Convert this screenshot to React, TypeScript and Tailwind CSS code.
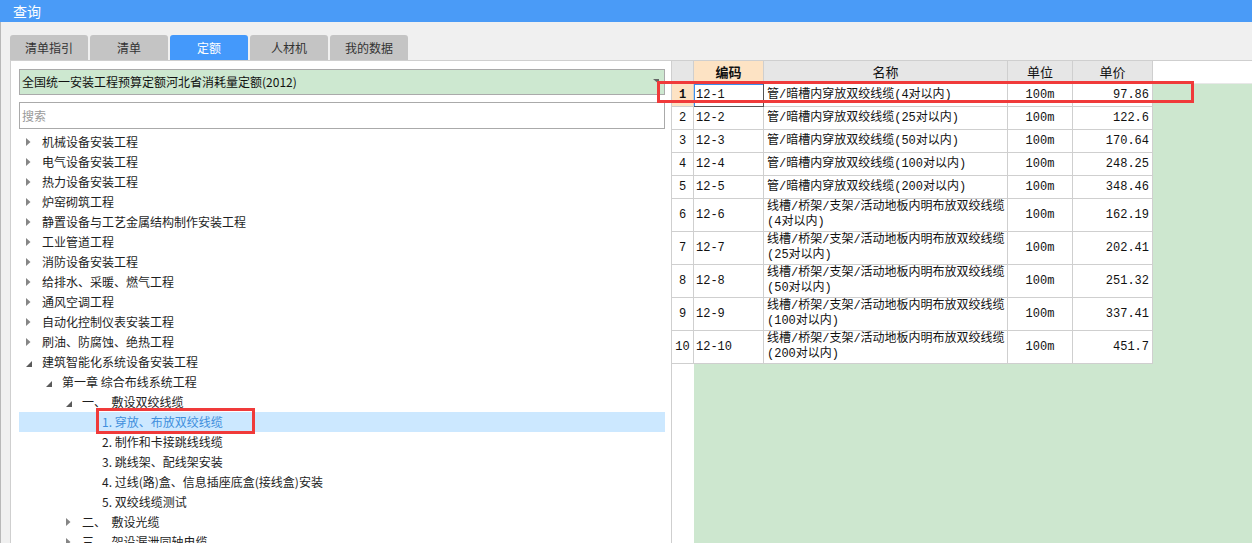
import React from "react";

const tabs = ["清单指引", "清单", "定额", "人材机", "我的数据"];

type TreeNode = { level: number; text: string; icon: "closed" | "open" | "none"; selected?: boolean };

const tree: TreeNode[] = [
  { level: 0, text: "机械设备安装工程", icon: "closed" },
  { level: 0, text: "电气设备安装工程", icon: "closed" },
  { level: 0, text: "热力设备安装工程", icon: "closed" },
  { level: 0, text: "炉窑砌筑工程", icon: "closed" },
  { level: 0, text: "静置设备与工艺金属结构制作安装工程", icon: "closed" },
  { level: 0, text: "工业管道工程", icon: "closed" },
  { level: 0, text: "消防设备安装工程", icon: "closed" },
  { level: 0, text: "给排水、采暖、燃气工程", icon: "closed" },
  { level: 0, text: "通风空调工程", icon: "closed" },
  { level: 0, text: "自动化控制仪表安装工程", icon: "closed" },
  { level: 0, text: "刷油、防腐蚀、绝热工程", icon: "closed" },
  { level: 0, text: "建筑智能化系统设备安装工程", icon: "open" },
  { level: 1, text: "第一章 综合布线系统工程", icon: "open" },
  { level: 2, text: "一、  敷设双绞线缆", icon: "open" },
  { level: 3, text: "1. 穿放、布放双绞线缆", icon: "none", selected: true },
  { level: 3, text: "2. 制作和卡接跳线线缆", icon: "none" },
  { level: 3, text: "3. 跳线架、配线架安装", icon: "none" },
  { level: 3, text: "4. 过线(路)盒、信息插座底盒(接线盒)安装", icon: "none" },
  { level: 3, text: "5. 双绞线缆测试", icon: "none" },
  { level: 2, text: "二、  敷设光缆", icon: "closed" },
  { level: 2, text: "三、  架设漏泄同轴电缆", icon: "closed" },
];

type Row = { n: number; code: string; name: string; name2?: string; price: string };

const rows: Row[] = [
  { n: 1, code: "12-1", name: "管/暗槽内穿放双绞线缆(4对以内)", price: "97.86" },
  { n: 2, code: "12-2", name: "管/暗槽内穿放双绞线缆(25对以内)", price: "122.6" },
  { n: 3, code: "12-3", name: "管/暗槽内穿放双绞线缆(50对以内)", price: "170.64" },
  { n: 4, code: "12-4", name: "管/暗槽内穿放双绞线缆(100对以内)", price: "248.25" },
  { n: 5, code: "12-5", name: "管/暗槽内穿放双绞线缆(200对以内)", price: "348.46" },
  { n: 6, code: "12-6", name: "线槽/桥架/支架/活动地板内明布放双绞线缆", name2: "(4对以内)", price: "162.19" },
  { n: 7, code: "12-7", name: "线槽/桥架/支架/活动地板内明布放双绞线缆", name2: "(25对以内)", price: "202.41" },
  { n: 8, code: "12-8", name: "线槽/桥架/支架/活动地板内明布放双绞线缆", name2: "(50对以内)", price: "251.32" },
  { n: 9, code: "12-9", name: "线槽/桥架/支架/活动地板内明布放双绞线缆", name2: "(100对以内)", price: "337.41" },
  { n: 10, code: "12-10", name: "线槽/桥架/支架/活动地板内明布放双绞线缆", name2: "(200对以内)", price: "451.7" },
];

const indent = ["pl-[8px]", "pl-[28px]", "pl-[48px]", "pl-[68px]"];

const Arrow = ({ kind }: { kind: TreeNode["icon"] }) => {
  if (kind === "closed")
    return (
      <svg width="5" height="8" viewBox="0 0 5 8" className="ml-[-1px]">
        <polygon points="0,0 4.5,4 0,8" fill="#858585" />
      </svg>
    );
  if (kind === "open")
    return (
      <svg width="6" height="6" viewBox="0 0 6 6" className="mt-[4px] ml-[-1px]">
        <polygon points="6,0 6,6 0,6" fill="#5a5a5a" />
      </svg>
    );
  return null;
};

const App = () => {
  return (
    <div className="relative w-[1252px] h-[543px] overflow-hidden bg-[#f0f0f0] flex flex-col font-['Noto_Sans_CJK_SC',sans-serif]">
      {/* title */}
      <div className="h-[22px] shrink-0 bg-[#4a9bf7] text-white text-[14px] leading-[22px] pl-[13px]">查询</div>

      <div className="flex-1 flex flex-col border-l border-[#b8b8b8] min-h-0">
        {/* tabs */}
        <div className="flex gap-[2px] pl-[9px] pt-[13px] h-[38px] shrink-0">
          {tabs.map((t, i) => (
            <div
              key={t}
              className={
                "w-[78px] h-[25px] rounded-t-[3px] flex items-center justify-center text-[12px] " +
                (i === 2 ? "bg-[#4499fb] text-white" : "bg-[#c4c4c4] text-[#333]")
              }
            >
              {t}
            </div>
          ))}
        </div>

        <div className="flex-1 flex min-h-0">
          {/* left panel */}
          <div className="ml-[9px] w-[662px] bg-white border-l border-t border-r border-[#cfcfcf] flex flex-col pl-[8px] pr-[6px] pt-[8px] overflow-hidden">
            <div className="relative h-[26px] shrink-0 bg-[#cde8d0] border border-[#aaaaaa] flex items-center pl-[2px] text-[12px] text-[#111]">
              全国统一安装工程预算定额河北省消耗量定额(2012)
              <svg width="6" height="5" viewBox="0 0 6 5" className="absolute right-[5px] top-[9px]">
                <polygon points="0,0 6,0 6,5" fill="#666" />
              </svg>
            </div>
            <div className="mt-[7px] h-[27px] shrink-0 border border-[#aaaaaa] flex items-center pl-[2px] text-[12px] text-[#9a9a9a]">
              搜索
            </div>
            <div className="mt-[3px] flex flex-col shrink-0">
              {tree.map((n, i) => (
                <div
                  key={i}
                  className={
                    "h-[20px] shrink-0 flex items-center text-[12px] leading-[20px] whitespace-pre " +
                    indent[n.level] +
                    (n.selected ? " bg-[#cce8ff] text-[#3f8fdd]" : " text-[#1e1e1e]")
                  }
                >
                  <div className="w-[15px] h-[20px] flex items-center shrink-0">
                    <Arrow kind={n.icon} />
                  </div>
                  {n.text}
                </div>
              ))}
            </div>
          </div>

          {/* right grid */}
          <div className="flex-1 flex flex-col border-t border-[#cfcfcf] font-['Liberation_Mono','Noto_Sans_CJK_SC',monospace] text-[12px] text-[#111]">
            <div className="flex h-[23px] shrink-0 bg-white">
              <div className="w-[22px] bg-[#e6e6e6] border-r border-b border-[#cfcfcf]" />
              <div className="w-[70px] bg-[#fde3c4] border-r border-b border-[#cfcfcf] flex items-center justify-center font-['Noto_Sans_CJK_SC',sans-serif] font-bold text-[13px]">
                编码
              </div>
              <div className="w-[244px] bg-[#e6e6e6] border-r border-b border-[#cfcfcf] flex items-center justify-center font-['Noto_Sans_CJK_SC',sans-serif] text-[13px]">
                名称
              </div>
              <div className="w-[65px] bg-[#e6e6e6] border-r border-b border-[#cfcfcf] flex items-center justify-center font-['Noto_Sans_CJK_SC',sans-serif] text-[13px]">
                单位
              </div>
              <div className="w-[80px] bg-[#e6e6e6] border-r border-b border-[#cfcfcf] flex items-center justify-center font-['Noto_Sans_CJK_SC',sans-serif] text-[13px]">
                单价
              </div>
              <div className="flex-1 border-b border-[#e8e8e8]" />
            </div>

            <div className="flex-1 flex min-h-0">
              <div className="w-[22px] bg-white flex flex-col">
                {rows.map((r) => (
                  <div
                    key={r.n}
                    className={
                      "shrink-0 border-r border-b border-[#cfcfcf] flex items-center justify-center " +
                      (r.name2 ? "h-[33px]" : "h-[23px]") +
                      (r.n === 1 ? " bg-[#fde3c4] font-bold" : "")
                    }
                  >
                    {r.n}
                  </div>
                ))}
              </div>
              <div className="flex-1 bg-[#cde7cf]">
                {rows.map((r) => (
                  <div key={r.n} className={"flex " + (r.name2 ? "h-[33px]" : "h-[23px]")}>
                    <div
                      className={
                        "w-[70px] bg-white border-r border-b flex items-center pl-[2px] " +
                        (r.n === 1
                          ? "border-[#555] shadow-[inset_1px_1px_0_#3a8fef]"
                          : "border-[#cfcfcf]")
                      }
                    >
                      {r.code}
                    </div>
                    <div className="w-[244px] bg-white border-r border-b border-[#cfcfcf] flex flex-col justify-center pl-[3px] leading-[15px] whitespace-nowrap">
                      <div>{r.name}</div>
                      {r.name2 && <div>{r.name2}</div>}
                    </div>
                    <div className="w-[65px] bg-white border-r border-b border-[#cfcfcf] flex items-center justify-center">
                      100m
                    </div>
                    <div className="w-[80px] bg-white border-r border-b border-[#cfcfcf] flex items-center justify-end pr-[3px]">
                      {r.price}
                    </div>
                  </div>
                ))}
              </div>
            </div>
          </div>
        </div>
      </div>

      {/* annotation boxes */}
      <div className="absolute left-[657px] top-[81px] w-[537px] h-[22px] border-[3px] border-[#f03a3a]" />
      <div className="absolute left-[96px] top-[408px] w-[159px] h-[26px] border-[3px] border-[#f03a3a]" />
    </div>
  );
};

export default App;
